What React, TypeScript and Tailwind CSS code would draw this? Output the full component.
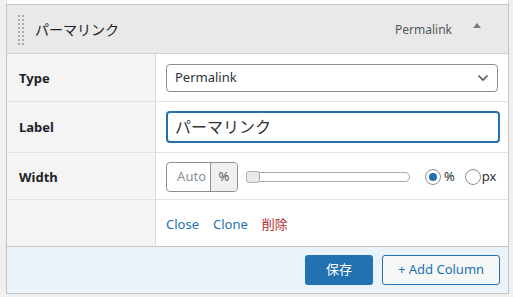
import React from "react";

export default function App() {
  const font = { fontFamily: '"Noto Sans", "Noto Sans CJK JP", sans-serif' };
  return (
    <div className="w-[513px] h-[297px] bg-[#f0f0f1] pl-[6px] pr-[4px] overflow-hidden" style={font}>
      <div className="h-[4px] bg-white border-x border-[#dcdcde]" />
      <div className="border border-[#c3c4c7] bg-white">
        {/* header */}
        <div className="h-[49px] bg-[#e9e9e9] flex items-center border-b border-[#d0d0d0] pt-[1px]">
          <div className="ml-[11px] grid grid-cols-2 gap-x-[2px] gap-y-[2px] w-[6px]">
            {Array.from({ length: 16 }).map((_, i) => (
              <span key={i} className="w-[2px] h-[2px] bg-[#a7aaad] block" />
            ))}
          </div>
          <div className="ml-[11px] text-[14px] text-[#1d2327]">パーマリンク</div>
          <div className="ml-auto text-[12px] text-[#50575e]">Permalink</div>
          <div className="ml-[21px] mr-[27px] -mt-[8px] w-0 h-0 border-l-[4px] border-r-[4px] border-b-[5px] border-l-transparent border-r-transparent border-b-[#787c82]" />
        </div>
        {/* rows */}
        <div className="flex h-[48px] border-b border-[#e2e2e2]">
          <div className="w-[149px] bg-[#f4f4f4] border-r border-[#dcdcde] flex items-center pl-[12px] pt-[3px] text-[13px] font-bold text-[#1d2327]">Type</div>
          <div className="flex-1 flex items-center pl-[10px] pr-[10px]">
            <div className="w-full h-[28px] border border-[#8c8f94] rounded-[4px] flex items-center pl-[8px] pr-[8px] text-[13px] text-[#2c3338]">
              <span>Permalink</span>
              <svg className="ml-auto" width="12" height="8" viewBox="0 0 12 8">
                <path d="M1.5 1.5 L6 6 L10.5 1.5" fill="none" stroke="#50575e" strokeWidth="1.6" />
              </svg>
            </div>
          </div>
        </div>
        <div className="flex h-[51px] border-b border-[#e2e2e2]">
          <div className="w-[149px] bg-[#f4f4f4] border-r border-[#dcdcde] flex items-center pl-[12px] pt-[2px] text-[13px] font-bold text-[#1d2327]">Label</div>
          <div className="flex-1 flex items-center pl-[10px] pr-[8px]">
            <div className="w-full h-[32px] border-2 border-[#2271b1] rounded-[4px] flex items-center pl-[7px] text-[16px] text-[#2c3338]">パーマリンク</div>
          </div>
        </div>
        <div className="flex h-[47px] border-b border-[#e2e2e2]">
          <div className="w-[149px] bg-[#f4f4f4] border-r border-[#dcdcde] flex items-center pl-[12px] pt-[4px] text-[13px] font-bold text-[#1d2327]">Width</div>
          <div className="flex-1 flex items-center pl-[10px] pt-[2px]">
            <div className="h-[30px] w-[72px] border border-[#8c8f94] rounded-[4px] flex overflow-hidden text-[13px]">
              <div className="flex-1 flex items-center justify-end pr-[4px] text-[#8c8f94]">Auto</div>
              <div className="w-[27px] border-l border-[#8c8f94] bg-[#f0f0f1] flex items-center justify-center text-[#50575e]">%</div>
            </div>
            <div className="relative ml-[8px] w-[164px] h-[10px] border border-[#a7aaad] rounded-full bg-white">
              <div className="absolute left-[-1px] top-[-2px] w-[14px] h-[12px] border border-[#b0b0b0] rounded-[3px] bg-[#e9e9e9]" />
            </div>
            <div className="ml-[15px] w-[16px] h-[16px] rounded-full border border-[#8c8f94] flex items-center justify-center">
              <span className="w-[8px] h-[8px] rounded-full bg-[#2271b1] block" />
            </div>
            <span className="ml-[3px] text-[13px] text-[#2c3338]">%</span>
            <div className="ml-[10px] w-[16px] h-[16px] rounded-full border border-[#8c8f94]" />
            <span className="ml-[1px] text-[13px] text-[#2c3338]">px</span>
          </div>
        </div>
        <div className="flex h-[47px] border-b border-[#c3c4c7]">
          <div className="w-[149px] bg-[#f4f4f4] border-r border-[#dcdcde]" />
          <div className="flex-1 flex items-center pl-[10px] pt-[4px] gap-[14px] text-[13px] text-[#2271b1]">
            <span>Close</span>
            <span>Clone</span>
            <span className="text-[#b32d2e]">削除</span>
          </div>
        </div>
        {/* footer */}
        <div className="h-[46px] bg-[#eaf2fa] flex items-center justify-end pr-[8px] gap-[9px]">
          <div className="w-[68px] h-[30px] bg-[#2271b1] rounded-[3px] text-white text-[13px] flex items-center justify-center">保存</div>
          <div className="w-[118px] h-[30px] border border-[#2271b1] bg-[#f6f7f7] rounded-[3px] text-[#2271b1] text-[13px] flex items-center justify-center">+ Add Column</div>
        </div>
      </div>
    </div>
  );
}
